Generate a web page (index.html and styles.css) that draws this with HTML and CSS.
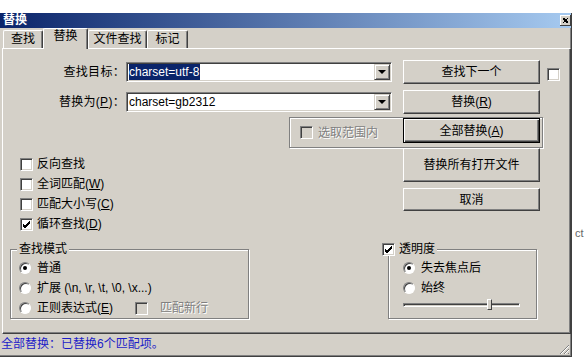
FILE: index.html
```html
<!DOCTYPE html>
<html lang="zh-CN">
<head>
  <meta charset="UTF-8">
  <title>替换</title>
  <link rel="stylesheet" href="styles.css">
</head>
<body>
  <div class="desktop">
    <div class="window">
      <div class="titlebar">
        <span class="title">替换</span>
        <span class="close">
          <svg width="11" height="11" viewBox="0 0 11 11"><path d="M3 3 L8 8 M8 3 L3 8 M3 4 L7 8 M4 3 L8 7" stroke="#000" stroke-width="1"/></svg>
        </span>
      </div>

      <div class="tabs">
        <div class="tab tab-find">查找</div>
        <div class="tab tab-active">替换</div>
        <div class="tab tab-files">文件查找</div>
        <div class="tab tab-mark">标记</div>
      </div>

      <div class="panel">
        <div class="range">
          <span class="box box-disabled"></span>
          <span class="disabled-text">选取范围内</span>
        </div>

        <div class="top">
          <div class="form">
            <div class="field">
              <span class="field-label">查找目标：</span>
              <div class="combo">
                <span class="combo-text"><span class="selection">charset=utf-8</span></span>
                <span class="combo-btn"><span class="arrow"></span></span>
              </div>
            </div>
            <div class="field field-second">
              <span class="field-label">替换为(<u>P</u>)：</span>
              <div class="combo">
                <span class="combo-text">charset=gb2312</span>
                <span class="combo-btn"><span class="arrow"></span></span>
              </div>
            </div>

            <div class="options">
              <div class="check"><span class="box"></span>反向查找</div>
              <div class="check"><span class="box"></span>全词匹配(<u>W</u>)</div>
              <div class="check"><span class="box"></span>匹配大小写(<u>C</u>)</div>
              <div class="check">
                <span class="box">
                  <svg width="9" height="9" viewBox="0 0 9 9"><path d="M1 4 L3 6 L8 1 M1 5 L3 7 L8 2 M1 6 L3 8 L8 3" stroke="#000" fill="none"/></svg>
                </span>循环查找(<u>D</u>)
              </div>
            </div>
          </div>

          <div class="buttons">
            <button class="btn btn-next">查找下一个</button>
            <button class="btn btn-replace">替换(<u>R</u>)</button>
            <button class="btn btn-all">全部替换(<u>A</u>)</button>
            <button class="btn btn-open">替换所有打开文件</button>
            <button class="btn btn-cancel">取消</button>
          </div>

          <div class="side">
            <span class="box"></span>
          </div>
        </div>

        <div class="groups">
          <div class="group group-mode">
            <div class="group-title">查找模式</div>
            <div class="radio"><span class="dot dot-on"></span>普通</div>
            <div class="radio"><span class="dot"></span>扩展 (\n, \r, \t, \0, \x...)</div>
            <div class="radio">
              <span class="dot"></span>正则表达式(<u>E</u>)
              <span class="newline">
                <span class="box box-disabled"></span>
                <span class="disabled-text">匹配新行</span>
              </span>
            </div>
          </div>

          <div class="group group-alpha">
            <div class="group-title group-title-check">
              <span class="box">
                <svg width="9" height="9" viewBox="0 0 9 9"><path d="M1 4 L3 6 L8 1 M1 5 L3 7 L8 2 M1 6 L3 8 L8 3" stroke="#000" fill="none"/></svg>
              </span>透明度
            </div>
            <div class="radio"><span class="dot dot-on"></span>失去焦点后</div>
            <div class="radio"><span class="dot"></span>始终</div>
            <div class="slider">
              <span class="track"></span>
              <span class="thumb"></span>
            </div>
          </div>
        </div>
      </div>

      <div class="status">
        <span class="status-text">全部替换：已替换6个匹配项。</span>
        <span class="grip">
          <svg width="11" height="11" viewBox="0 0 11 11">
            <path d="M10 1 L1 10 M10 5 L5 10 M10 9 L9 10" stroke="#808080"/>
            <path d="M10 2 L2 10 M10 6 L6 10" stroke="#fff"/>
          </svg>
        </span>
      </div>
    </div>

    <div class="outside"><span>ct</span></div>
  </div>
</body>
</html>
```

FILE: styles.css
```css
body {
  margin: 0;
  background: #fff;
  font-family: "Liberation Sans", "Noto Sans CJK SC", sans-serif;
  font-size: 12px;
  color: #000;
}

.desktop {
  display: flex;
  padding-top: 13px;
  height: 346px;
}

.window {
  width: 574px;
  height: 344px;
  box-sizing: border-box;
  background: #d4d0c8;
  border-right: 1px solid #404040;
  border-bottom: 1px solid #404040;
  box-shadow: inset -1px -1px #808080;
  display: flex;
  flex-direction: column;
}

/* title bar */
.titlebar {
  height: 15px;
  display: flex;
  align-items: center;
  background: linear-gradient(to right, #0a246a, #a6caf0);
}

.title {
  color: #fff;
  font-weight: bold;
  line-height: 13px;
  margin-left: 3px;
}

.close {
  margin-left: auto;
  margin-right: 0;
  width: 11px;
  height: 11px;
  background: #d4d0c8;
  box-shadow: inset -1px -1px #404040, inset 1px 1px #fff;
  display: flex;
}

/* tabs */
.tabs {
  height: 20px;
  display: flex;
  align-items: flex-end;
  padding-left: 3px;
}

.tab {
  height: 18px;
  box-sizing: border-box;
  border-top: 1px solid #fff;
  border-left: 1px solid #fff;
  border-right: 1px solid #404040;
  border-top-left-radius: 2px;
  border-top-right-radius: 2px;
  box-shadow: inset -1px 0 #808080;
  text-align: center;
  line-height: 16px;
}

.tab-find { width: 40px; }
.tab-files { width: 59px; }
.tab-mark { width: 41px; }

.tab-active {
  width: 45px;
  height: 21px;
  margin-bottom: -1px;
  background: #d4d0c8;
  position: relative;
  z-index: 2;
  line-height: 15px;
  padding-bottom: 3px;
}

/* panel */
.panel {
  position: relative;
  margin-left: 2px;
  width: 569px;
  height: 286px;
  box-sizing: border-box;
  border-top: 1px solid #fff;
  border-left: 1px solid #fff;
  border-right: 1px solid #404040;
  border-bottom: 1px solid #404040;
  box-shadow: inset -1px -1px #808080;
  padding-top: 11px;
}

.top {
  display: flex;
  align-items: flex-start;
}

.form {
  width: 400px;
}

.field {
  height: 24px;
  display: flex;
  align-items: center;
}

.field-second {
  margin-top: 6px;
}

.field-label {
  width: 122px;
  padding-right: 1px;
  text-align: right;
  line-height: 14px;
  letter-spacing: 0.3px;
}

.combo {
  width: 266px;
  height: 20px;
  box-sizing: border-box;
  background: #fff;
  border-top: 1px solid #808080;
  border-left: 1px solid #808080;
  border-right: 1px solid #fff;
  border-bottom: 1px solid #fff;
  box-shadow: inset 1px 1px #404040, inset -1px -1px #d4d0c8;
  padding: 1px;
  display: flex;
}

.combo-text {
  flex: 1;
  line-height: 16px;
  padding-left: 1px;
}

.selection {
  background: #0a246a;
  color: #fff;
  display: inline-block;
  padding-right: 1px;
}

.combo-btn {
  width: 16px;
  height: 16px;
  box-sizing: border-box;
  background: #d4d0c8;
  border-top: 1px solid #d4d0c8;
  border-left: 1px solid #d4d0c8;
  border-right: 1px solid #404040;
  border-bottom: 1px solid #404040;
  box-shadow: inset 1px 1px #fff, inset -1px -1px #808080;
  display: flex;
  align-items: center;
  justify-content: center;
}

.arrow {
  width: 0;
  height: 0;
  border-left: 4px solid transparent;
  border-right: 4px solid transparent;
  border-top: 4px solid #000;
}

/* check boxes */
.options {
  margin-top: 40px;
  padding-left: 17px;
}

.check {
  height: 20px;
  display: flex;
  align-items: center;
  line-height: 14px;
}

.box {
  width: 13px;
  height: 13px;
  box-sizing: border-box;
  background: #fff;
  border-top: 1px solid #808080;
  border-left: 1px solid #808080;
  border-right: 1px solid #fff;
  border-bottom: 1px solid #fff;
  box-shadow: inset 1px 1px #404040, inset -1px -1px #d4d0c8;
  display: inline-flex;
  align-items: center;
  justify-content: center;
  margin-right: 4px;
  flex-shrink: 0;
}

.box-disabled {
  background: #d4d0c8;
}

.disabled-text {
  color: #808080;
  text-shadow: 1px 1px #fff;
  line-height: 14px;
}

/* buttons */
.buttons {
  width: 137px;
  display: flex;
  flex-direction: column;
  position: relative;
  z-index: 1;
}

.btn {
  font: inherit;
  color: #000;
  background: #d4d0c8;
  border-top: 1px solid #fff;
  border-left: 1px solid #fff;
  border-right: 1px solid #404040;
  border-bottom: 1px solid #404040;
  box-shadow: inset -1px -1px #808080;
  padding: 0;
  line-height: 14px;
}

.btn-next { height: 24px; }
.btn-replace { height: 24px; margin-top: 6px; }
.btn-all {
  height: 25px;
  margin-top: 4px;
  border: 1px solid #000;
  box-shadow: inset 1px 1px #fff, inset -1px -1px #404040, inset -2px -2px #808080;
}
.btn-open { height: 34px; margin-top: 5px; }
.btn-cancel { height: 23px; margin-top: 6px; }

.side {
  margin-left: 7px;
  margin-top: 8px;
}

/* frame behind the replace-all button */
.range {
  position: absolute;
  left: 286px;
  top: 68px;
  width: 254px;
  height: 31px;
  box-sizing: border-box;
  border: 1px solid #808080;
  box-shadow: inset 1px 1px #fff, 1px 1px #fff;
  display: flex;
  align-items: center;
  padding-left: 10px;
}

.range .box {
  margin-right: 5px;
}

/* group boxes */
.groups {
  display: flex;
  margin-top: 15px;
}

.group {
  height: 70px;
  box-sizing: border-box;
  border: 1px solid #808080;
  box-shadow: inset 1px 1px #fff, 1px 1px #fff;
}

.group-mode {
  margin-left: 7px;
  width: 239px;
  padding-left: 8px;
}

.group-alpha {
  margin-left: 139px;
  width: 149px;
  padding-left: 14px;
}

.group-title {
  display: flex;
  align-items: center;
  width: max-content;
  height: 13px;
  line-height: 13px;
  margin-top: -7px;
  margin-left: -2px;
  margin-bottom: 2px;
  padding: 0 2px;
  background: #d4d0c8;
}

.group-title-check {
  margin-left: -21px;
  padding: 0 2px 0 0;
}

.group-title-check .box {
  margin-right: 4px;
}

.radio {
  height: 20px;
  display: flex;
  align-items: center;
  line-height: 14px;
}

.dot {
  width: 12px;
  height: 12px;
  box-sizing: border-box;
  border-radius: 50%;
  background: #fff;
  border: 1px solid;
  border-color: #808080 #fff #fff #808080;
  box-shadow: inset 1px 1px #404040;
  margin-right: 6px;
  display: inline-flex;
  align-items: center;
  justify-content: center;
  flex-shrink: 0;
}

.dot-on::after {
  content: "";
  width: 4px;
  height: 4px;
  border-radius: 50%;
  background: #000;
}

.newline {
  display: flex;
  align-items: center;
  margin-left: 22px;
}

.newline .box {
  margin-right: 12px;
}

.slider {
  position: relative;
  height: 14px;
  display: flex;
  align-items: center;
}

.track {
  width: 117px;
  height: 4px;
  box-sizing: border-box;
  border-top: 1px solid #808080;
  border-left: 1px solid #808080;
  border-right: 1px solid #fff;
  border-bottom: 1px solid #fff;
  box-shadow: inset 1px 1px #404040;
}

.thumb {
  position: absolute;
  left: 84px;
  top: 1px;
  width: 5px;
  height: 11px;
  box-sizing: border-box;
  background: #d4d0c8;
  border-top: 1px solid #fff;
  border-left: 1px solid #fff;
  border-right: 1px solid #404040;
  border-bottom: 1px solid #404040;
}

/* status bar */
.status {
  flex: 1;
  display: flex;
  padding-top: 3px;
}

.status-text {
  color: #1c1cc8;
  line-height: 14px;
  margin-left: 1px;
}

.grip {
  margin-left: auto;
  margin-right: 1px;
  align-self: flex-end;
  display: flex;
  margin-bottom: 1px;
}

.outside {
  width: 11px;
  font-size: 11px;
  color: #666;
  padding-top: 214px;
  padding-left: 3px;
}
```
